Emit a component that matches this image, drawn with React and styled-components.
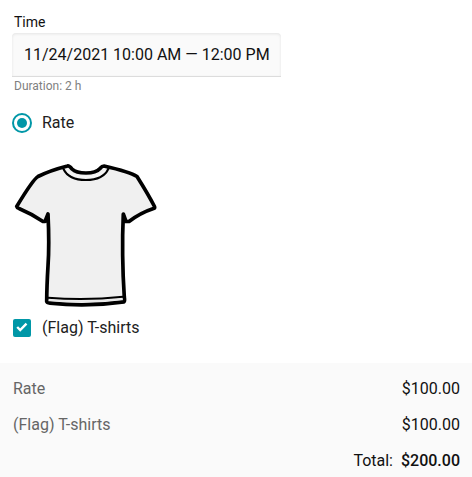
import React, { useState } from 'react';
import styled, { createGlobalStyle, ThemeProvider } from 'styled-components';

const theme = {
	color: {
		primary: '#0097a7',
		text: '#212121',
		muted: '#666',
		hint: '#808080',
		panel: '#fafafa',
	},
};

const GlobalStyle = createGlobalStyle`
	* {
		box-sizing: border-box;
	}
	body {
		margin: 0;
		background: #fff;
		font-family: Roboto, 'Liberation Sans', sans-serif;
		font-size: 16px;
		color: ${theme.color.text};
	}
`;

const Page = styled.main`
	display: flex;
	flex-direction: column;
	height: 477px;
	overflow: hidden;
`;

const Form = styled.section`
	display: flex;
	flex-direction: column;
	flex-shrink: 0;
	align-items: flex-start;
	height: 363px;
	padding: 13px 12px 0;
`;

const Label = styled.label`
	padding-left: 2px;
	font-size: 14px;
	line-height: 18px;
	margin-bottom: 2px;
	color: #111;
`;

const TimeField = styled.div`
	display: flex;
	align-items: center;
	width: 269px;
	height: 44px;
	padding: 0 12px;
	border-bottom: 1px solid #dcdcdc;
	border-radius: 4px 4px 0 0;
	background: ${({ theme }) => theme.color.panel};
	box-shadow: inset 0 1px 3px rgba(0, 0, 0, 0.09);
	color: #111;
	white-space: nowrap;
`;

const Hint = styled.div`
	padding-left: 2px;
	font-size: 12px;
	line-height: 18px;
	color: ${({ theme }) => theme.color.hint};
`;

const Option = styled.label`
	display: flex;
	align-items: center;
	height: 24px;
	gap: ${({ $gap }) => $gap};
	margin-top: ${({ $top }) => $top};
	cursor: pointer;
`;

const OptionText = styled.span`
	padding-bottom: 2px;
`;

const HiddenInput = styled.input`
	display: none;
`;

const RadioMark = styled.span`
	display: flex;
	align-items: center;
	justify-content: center;
	width: 20px;
	height: 20px;
	border: 2px solid ${({ theme }) => theme.color.primary};
	border-radius: 50%;

	&::after {
		content: '';
		width: 10px;
		height: 10px;
		border-radius: 50%;
		background: ${({ theme }) => theme.color.primary};
	}
`;

const CheckMark = styled.span`
	display: flex;
	align-items: center;
	justify-content: center;
	width: 18px;
	height: 18px;
	margin-left: 1px;
	padding-bottom: 2px;
	border-radius: 2px;
	background: ${({ theme, $checked }) => ($checked ? theme.color.primary : '#bbb')};
`;

const Shirt = styled.svg`
	display: block;
	width: 148px;
	height: 150px;
	margin-top: 25px;
`;

const Summary = styled.section`
	flex: 1;
	padding: 7px 12px 0 13px;
	background: ${({ theme }) => theme.color.panel};
`;

const Row = styled.div`
	display: flex;
	align-items: center;
	justify-content: ${({ $end }) => ($end ? 'flex-end' : 'space-between')};
	height: 36px;
	gap: 8px;
`;

const Name = styled.span`
	color: ${({ theme }) => theme.color.muted};
`;

const Price = styled.span`
	font-weight: ${({ $bold }) => ($bold ? 500 : 400)};
	color: #111;
`;

const TShirt = () => (
	<Shirt viewBox='12 160 148 150' fill='none' stroke='#000' strokeLinejoin='round' strokeLinecap='round'>
		<path
			d='M67.5 166 Q50 170.5 38 176.5 Q33 179.5 16.7 206.5 Q17 208 19 208.5 Q32 214 43 221.5 L45 221.5 L48 214 Q49.5 245 48 266 Q46.8 286 46.7 301.5 Q47 303 50 303.2 Q88 307 124 301.8 Q125 301 124.3 297 Q121.5 255 123.3 214 L126 221.5 L129 221.5 Q140 213 153.5 208.5 Q155 208 154.5 206.5 Q148 194 137 176.5 Q130 172 104 166 Q102 166 100 168.5 Q96 173 86 173 Q76 173 72 169 Q69 165.5 67.5 166 Z'
			fill='#f0f0f0'
			strokeWidth='3.7'
		/>
		<path d='M63.5 169 C67 176.5 75 180 86 180 C97 180 105 176.5 108.5 168.5' strokeWidth='2.1' />
		<path d='M68 171.5 C72 175.7 78 177 86 177 C94 177 101 175.5 104.500 171' stroke='#f5f5f5' strokeWidth='2' />
		<path d='M48 297.8 Q86 300.8 123 296.8' strokeWidth='2' />
		<path d='M49.500 300.2 Q86 303.4 122 299.2' stroke='#e8e8e8' strokeWidth='1.6' />
	</Shirt>
);

const App = () => {
	const [withShirts, setWithShirts] = useState(true);

	return (
		<ThemeProvider theme={theme}>
			<GlobalStyle />
			<Page>
				<Form>
					<Label>Time</Label>
					<TimeField>11/24/2021 10:00 AM — 12:00 PM</TimeField>
					<Hint>Duration: 2 h</Hint>
					<Option $gap='10px' $top='16px'>
						<HiddenInput type='radio' name='rate' defaultChecked />
						<RadioMark />
						<OptionText>Rate</OptionText>
					</Option>
					<TShirt />
					<Option $gap='11px' $top='6px'>
						<HiddenInput
							type='checkbox'
							checked={withShirts}
							onChange={() => setWithShirts(!withShirts)}
						/>
						<CheckMark $checked={withShirts}>
							<svg width='12' height='10' viewBox='0 0 12 10' fill='none'>
								<path d='M1.2 5 L4.2 8 L10.5 1.7' stroke='#fff' strokeWidth='2.4' />
							</svg>
						</CheckMark>
						<OptionText>(Flag) T-shirts</OptionText>
					</Option>
				</Form>
				<Summary>
					<Row>
						<Name>Rate</Name>
						<Price>$100.00</Price>
					</Row>
					<Row>
						<Name>(Flag) T-shirts</Name>
						<Price>$100.00</Price>
					</Row>
					<Row $end>
						<Price>Total:</Price>
						<Price $bold>$200.00</Price>
					</Row>
				</Summary>
			</Page>
		</ThemeProvider>
	);
};

export default App;
